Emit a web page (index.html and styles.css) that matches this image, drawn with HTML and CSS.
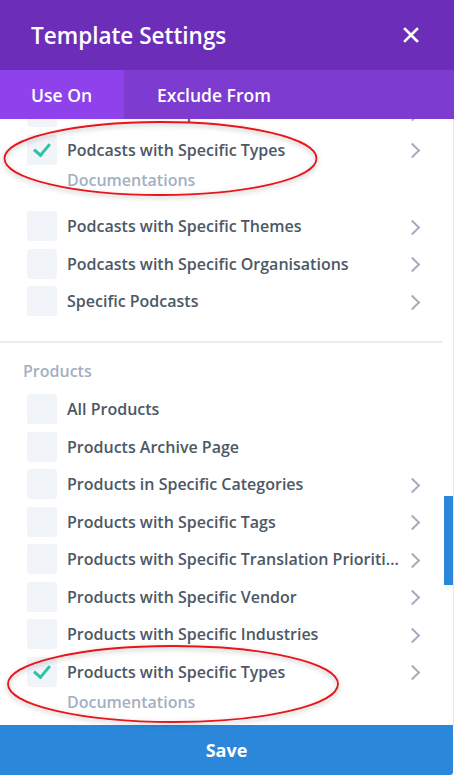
FILE: index.html
```html
<!DOCTYPE html>
<html lang="en">
<head>
<meta charset="utf-8">
<title>Template Settings</title>
<link rel="stylesheet" href="styles.css">
</head>
<body>
<div class="modal">
  <header class="modal-header">
    <h1 class="modal-title">Template Settings</h1>
    <button class="close" aria-label="Close">
      <svg width="16" height="16" viewBox="0 0 16 16"><path d="M2 2 L14 14 M14 2 L2 14" stroke="#fff" stroke-width="2.6" stroke-linecap="square" fill="none"/></svg>
    </button>
  </header>

  <nav class="tabs">
    <div class="tab active">Use On</div>
    <div class="tab">Exclude From</div>
  </nav>

  <div class="modal-body">
    <div class="scroll-area">
      <section class="group">
        <ul class="options">
          <li class="option">
            <div class="row"><span class="box"></span><span class="label">Podcasts with Specific Hosts</span><span class="chev"></span></div>
          </li>
          <li class="option">
            <div class="row"><span class="box checked"></span><span class="label">Podcasts with Specific Types</span><span class="chev"></span></div>
            <div class="sub">Documentations</div>
          </li>
          <li class="option">
            <div class="row"><span class="box"></span><span class="label">Podcasts with Specific Themes</span><span class="chev"></span></div>
          </li>
          <li class="option">
            <div class="row"><span class="box"></span><span class="label">Podcasts with Specific Organisations</span><span class="chev"></span></div>
          </li>
          <li class="option">
            <div class="row"><span class="box"></span><span class="label">Specific Podcasts</span><span class="chev"></span></div>
          </li>
        </ul>
      </section>

      <section class="group">
        <h2 class="group-title">Products</h2>
        <ul class="options">
          <li class="option"><div class="row"><span class="box"></span><span class="label">All Products</span></div></li>
          <li class="option"><div class="row"><span class="box"></span><span class="label">Products Archive Page</span></div></li>
          <li class="option"><div class="row"><span class="box"></span><span class="label">Products in Specific Categories</span><span class="chev"></span></div></li>
          <li class="option"><div class="row"><span class="box"></span><span class="label">Products with Specific Tags</span><span class="chev"></span></div></li>
          <li class="option"><div class="row"><span class="box"></span><span class="label">Products with Specific Translation Priorities</span><span class="chev"></span></div></li>
          <li class="option"><div class="row"><span class="box"></span><span class="label">Products with Specific Vendor</span><span class="chev"></span></div></li>
          <li class="option"><div class="row"><span class="box"></span><span class="label">Products with Specific Industries</span><span class="chev"></span></div></li>
          <li class="option">
            <div class="row"><span class="box checked"></span><span class="label">Products with Specific Types</span><span class="chev"></span></div>
            <div class="sub">Documentations</div>
          </li>
        </ul>
      </section>
    </div>
    <div class="scroll-thumb"></div>
  </div>

  <button class="save">Save</button>

  <svg class="marks" width="454" height="775" viewBox="0 0 454 775">
    <defs>
      <filter id="soft" x="-10%" y="-30%" width="120%" height="160%">
        <feDropShadow dx="0" dy="2" stdDeviation="2.5" flood-color="#000" flood-opacity="0.28"/>
      </filter>
    </defs>
    <ellipse cx="160.5" cy="158.5" rx="156" ry="36.5" fill="none" stroke="#e8141a" stroke-width="1.8" filter="url(#soft)"/>
    <ellipse cx="173" cy="684" rx="165" ry="38" fill="none" stroke="#e8141a" stroke-width="1.8" filter="url(#soft)"/>
  </svg>
</div>
</body>
</html>
```

FILE: styles.css
```css
* {
  box-sizing: border-box;
}

html, body {
  margin: 0;
  padding: 0;
  background: #fff;
}

body {
  font-family: "Open Sans", "Noto Sans", sans-serif;
  -webkit-font-smoothing: antialiased;
}

.modal {
  position: relative;
  width: 454px;
  height: 775px;
  display: flex;
  flex-direction: column;
  overflow: hidden;
}

/* header */
.modal-header {
  height: 70px;
  flex: none;
  background: #6c2eb9;
  display: flex;
  align-items: center;
  justify-content: space-between;
  padding: 0 35px 0 31px;
}

.modal-title {
  margin: 0;
  color: #fff;
  font-size: 22.5px;
  font-weight: 600;
  line-height: 1;
  padding-top: 2px;
}

.close {
  border: 0;
  padding: 0;
  background: none;
  width: 16px;
  height: 16px;
  display: flex;
}

/* tabs */
.tabs {
  height: 49px;
  flex: none;
  display: flex;
  background: #7e3bd0;
}

.tab {
  color: #fff;
  font-size: 17.5px;
  font-weight: 600;
  white-space: nowrap;
  display: flex;
  align-items: center;
  padding: 0 33px;
}

.tab.active {
  background: #8f42ec;
  width: 124px;
  padding: 0 0 0 31px;
}

/* body */
.modal-body {
  position: relative;
  flex: 1;
  overflow: hidden;
  border-right: 1px solid #e4e9ef;
  background: #fff;
}

.scroll-area {
  margin-top: -22px;
  margin-right: 11px;
}

.group {
  padding: 0 21px 25px 27px;
}

.group + .group {
  border-top: 2px solid #e7ecf3;
  padding-top: 18px;
}

.group-title {
  margin: 0 0 13px -4px;
  font-size: 16px;
  font-weight: 600;
  line-height: 20px;
  color: #a3b0c2;
}

.options {
  list-style: none;
  margin: 0;
  padding: 0;
  display: flex;
  flex-direction: column;
  gap: 7.5px;
}

.row {
  height: 30px;
  display: flex;
  align-items: center;
}

.box {
  flex: none;
  width: 30px;
  height: 30px;
  border-radius: 3px;
  background: #f1f4f8;
  margin-right: 10px;
  position: relative;
}

.box.checked::after {
  content: "";
  position: absolute;
  left: 10px;
  top: 5px;
  width: 7px;
  height: 13px;
  border: solid #29c4a9;
  border-width: 0 3px 3px 0;
  transform: rotate(40deg);
}

.label {
  flex: 1;
  min-width: 0;
  font-size: 16px;
  font-weight: 600;
  color: #4c5866;
  white-space: nowrap;
  overflow: hidden;
  text-overflow: ellipsis;
}

.chev {
  flex: none;
  width: 14px;
  height: 14px;
  margin-left: 5px;
  position: relative;
}

.chev::before {
  content: "";
  position: absolute;
  left: 0;
  top: 2.5px;
  width: 9px;
  height: 9px;
  border: solid #a3aec0;
  border-width: 2.6px 2.6px 0 0;
  transform: rotate(45deg);
}

.sub {
  margin: 5px 0 14px 40px;
  font-size: 16px;
  font-weight: 600;
  line-height: 20px;
  color: #a3b0c2;
}

.scroll-thumb {
  position: absolute;
  right: 0;
  top: 377px;
  width: 9px;
  height: 89px;
  background: #2b87da;
}

/* footer */
.save {
  flex: none;
  height: 50px;
  border: 0;
  background: #2b87da;
  color: #fff;
  font-family: "Open Sans", "Noto Sans", sans-serif;
  font-size: 18px;
  font-weight: 700;
  width: 453px;
  border-bottom-right-radius: 3px;
}

.marks {
  position: absolute;
  left: 0;
  top: 0;
  pointer-events: none;
}
```
